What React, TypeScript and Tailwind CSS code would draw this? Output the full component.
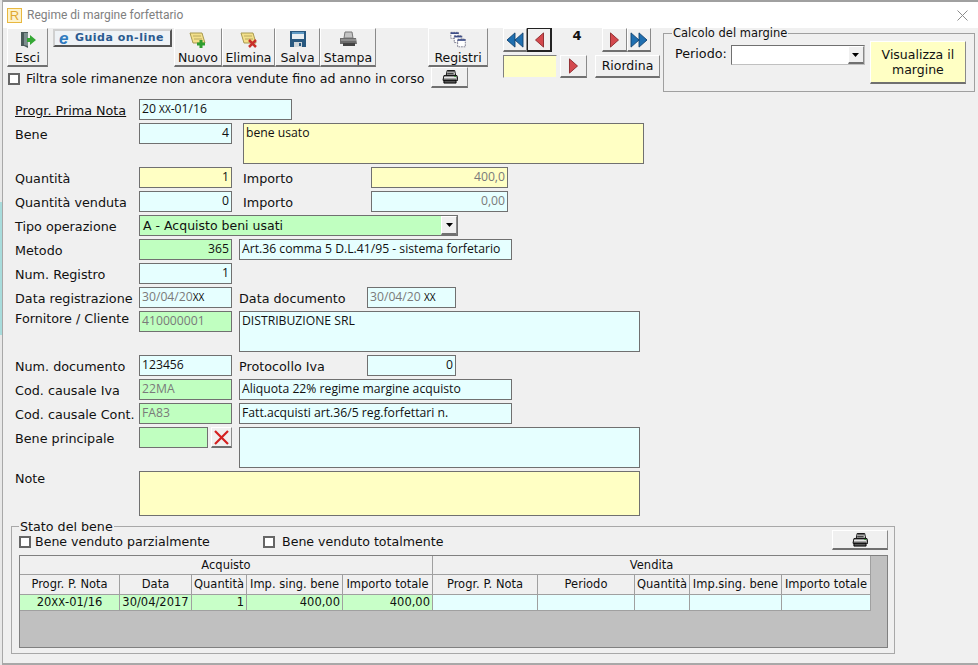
import type { ReactNode } from "react"

const bevel = "border border-t-white border-l-white border-r-[#8a8a8a] border-b-[#707070] border-b-2 bg-[#f0f0f0]"
const cyan = "bg-[#e6ffff]"
const yellow = "bg-[#ffffc4]"
const green = "bg-[#c0ffc0]"

const DoorIcon = () => (
  <svg width="18" height="18" viewBox="0 0 18 18">
    <path d="M2 1h7v16l-4-2H2z" fill="#4a5a5a" />
    <path d="M5 2h4v13l-4-1z" fill="#7d8f8f" />
    <path d="M8 7h3V4l6 5-6 5v-3H8z" fill="#35a835" />
  </svg>
)

const NoteIcon = ({ del }: { del?: boolean }) => (
  <svg width="20" height="18" viewBox="0 0 20 18">
    <path d="M2 2h12l3 10H5z" fill="#f3e08a" stroke="#a89a50" />
    <path d="M5 5h8M6 8h8" stroke="#b8a860" />
    {del ? (
      <path d="M10 9l7 7M17 9l-7 7" stroke="#c8302a" strokeWidth="2.5" />
    ) : (
      <path d="M13 9v8M9 13h8" stroke="#2f9e2f" strokeWidth="3" />
    )}
  </svg>
)

const FloppyIcon = () => (
  <svg width="16" height="16" viewBox="0 0 16 16">
    <path d="M0 0h16v16H0z" fill="#28587f" />
    <path d="M2 1h12v7H2z" fill="#e8eef2" />
    <path d="M2 1h12v2H2z" fill="#5f9ac4" />
    <path d="M4 11h8v5H4z" fill="#cfd6da" />
    <path d="M9 12h2v3H9z" fill="#28587f" />
  </svg>
)

const GrayPrinter = () => (
  <svg width="19" height="16" viewBox="0 0 19 16">
    <path d="M6 1h7l1 6H5z" fill="#c4c4c4" stroke="#777" />
    <path d="M1 7h16l1 6H1z" fill="#6c6c6c" />
    <path d="M2 8h15v2H2z" fill="#8f8f8f" />
    <path d="M4 12h12v3H4z" fill="#444" />
  </svg>
)

const BlackPrinter = () => (
  <svg width="16" height="14" viewBox="0 0 17 15">
    <path d="M5.500.5h8l1 5h-10z" fill="#fff" stroke="#000" />
    <path d="M6 2h7M5.500 4h7" stroke="#000" />
    <path d="M2 6h14l1 5H1z" fill="#a8a8a8" stroke="#000" />
    <path d="M2 8h13" stroke="#eee" />
    <path d="M2 11h13v3H2z" fill="#555" stroke="#000" />
    <path d="M13 7h2" stroke="#2c9c2c" />
  </svg>
)

const WindowsIcon = () => (
  <svg width="17" height="18" viewBox="0 0 20 20">
    <path d="M1 1h9v7H1z" fill="#fff" stroke="#6a6a80" strokeDasharray="2 1" />
    <path d="M1 1h9v2H1z" fill="#3d4d88" />
    <path d="M5 5h9v8H5z" fill="#fff" stroke="#6a6a80" strokeDasharray="2 1" />
    <path d="M5 5h9v2H5z" fill="#3d4d88" />
    <path d="M9 9h9v9H9z" fill="#fff" stroke="#6a6a80" strokeDasharray="2 1" />
    <path d="M9 9h9v2H9z" fill="#3d4d88" />
  </svg>
)

const Arrow = ({ left, double }: { left?: boolean; double?: boolean }) => {
  const fill = double ? "#1f6fb0" : "#d4494e"
  const stroke = double ? "#0d3f6e" : "#8a2427"
  return (
    <svg width={double ? 18 : 11} height="16" viewBox={double ? "0 0 20 18" : "0 0 11 18"} className={left ? "" : "rotate-180"}>
      <path d="M1 9l9-8v16z" fill={fill} stroke={stroke} />
      {double && <path d="M10 9l9-8v16z" fill={fill} stroke={stroke} />}
    </svg>
  )
}

const ToolBtn = ({ icon, label, w }: { icon: ReactNode; label: string; w: string }) => (
  <button className={`${bevel} ${w} flex h-[39px] flex-col items-center justify-between pt-[2px] text-[12.500px] leading-[14px]`}>
    {icon}
    <span>{label}</span>
  </button>
)

const Field = ({ w, h = "h-[21px]", bg, right, gray, children }: { w: string; h?: string; bg: string; right?: boolean; gray?: boolean; children?: ReactNode }) => (
  <div className={`${w} ${h} ${bg} ${right ? "text-right" : ""} ${gray ? "text-[#7a7a7a]" : "text-[#111]"} shrink-0 border border-[#707070] px-[2px] font-['Open_Sans',sans-serif] text-[12.200px] leading-[18px] whitespace-nowrap`}>
    {children}
  </div>
)

const Row = ({ label, children, underline, high }: { label: string; children?: ReactNode; underline?: boolean; high?: boolean }) => (
  <div className="mt-[3px] flex items-start pl-[12px]">
    <span className={`w-[124px] shrink-0 text-[12.750px] leading-[17px] whitespace-nowrap ${high ? "-mt-[1px]" : "pt-[3px]"} ${underline ? "underline" : ""}`}>{label}</span>
    {children}
  </div>
)

const SideLabel = ({ ml, children }: { ml: string; children: ReactNode }) => (
  <span className={`${ml} w-[128px] pt-[3px] text-[12.750px] leading-[17px]`}>{children}</span>
)

const Check = () => <input type="checkbox" readOnly className="size-[12px] shrink-0 appearance-none border-2 border-[#666] bg-white" />

const Small = ({ children }: { children: ReactNode }) => <span className="text-[10px] text-black">{children}</span>

const DropArrow = () => (
  <span className={`${bevel} absolute top-0 right-0 flex h-full w-[16px] items-center justify-center`}>
    <svg width="7" height="4" viewBox="0 0 7 4">
      <path d="M0 0h7L3.500 4z" fill="#000" />
    </svg>
  </span>
)

const headAcquisto = [
  { label: "Progr. P. Nota", w: "w-[100px]" },
  { label: "Data", w: "w-[72px]" },
  { label: "Quantità", w: "w-[55px]" },
  { label: "Imp. sing. bene", w: "w-[96px]" },
  { label: "Importo totale", w: "w-[90px]" },
]
const headVendita = [
  { label: "Progr. P. Nota", w: "w-[105px]" },
  { label: "Periodo", w: "w-[97px]" },
  { label: "Quantità", w: "w-[55px]" },
  { label: "Imp.sing. bene", w: "w-[92px]" },
  { label: "Importo totale", w: "w-[89px]" },
]

const headCell = "h-[20px] border-r border-b border-[#a0a0a0] bg-[#f0f0f0] text-center text-[11.500px] leading-[19px] whitespace-nowrap"
const rowCell = "h-[16px] border-r border-b border-[#a0a0a0] text-[11.500px] leading-[15px] whitespace-nowrap px-[2px]"

export default function App() {
  return (
    <div className="flex h-[665px] w-[978px] overflow-hidden bg-[#f0f0f0] font-['DejaVu_Sans',sans-serif] text-[#111]">
      <div className="flex w-[3px] shrink-0 flex-col border-r border-[#a8a8a8] bg-[#e8e8e8]">
        <div className="h-[202px]" />
        <div className="h-[133px] bg-[#a8dcdc]" />
      </div>

      <div className="flex min-w-0 flex-1 flex-col">
        <div className="flex h-[28px] shrink-0 items-center border-t-2 border-[#a0a0a0] bg-white pr-[10px] pl-[4px]">
          <span className="flex size-[15px] items-center justify-center border border-[#e8b840] bg-[#fdf2cc] font-['Liberation_Sans',sans-serif] text-[13px] leading-none text-[#e0a830]">R</span>
          <span className="ml-[5px] flex-1 font-['Roboto',sans-serif] text-[12px] text-[#808080]">Regime di margine forfettario</span>
          <svg width="11" height="11" viewBox="0 0 11 11">
            <path d="M.5.5l10 10M10.500.5l-10 10" stroke="#8c8c8c" fill="none" />
          </svg>
        </div>

        <div className="flex h-[68px] shrink-0 pl-[4px]">
          <div className="w-[496px] shrink-0">
            <div className="flex items-start">
              <ToolBtn icon={<DoorIcon />} label="Esci" w="w-[41px]" />
              <button className="mt-[1px] ml-[5px] flex h-[18px] w-[119px] items-center gap-[6px] border-2 border-t-[#d0d0d0] border-r-[#555] border-b-[#555] border-l-[#d0d0d0] bg-[#eef2f6] pl-[4px] text-[11px] font-bold tracking-[0.5px] whitespace-nowrap text-[#2a5a90]">
                <span className="font-['Liberation_Sans',sans-serif] text-[17px] leading-none text-[#2f7ac0] italic">e</span>
                Guida on-line
              </button>
              <div className="ml-[2px] flex">
                <ToolBtn icon={<NoteIcon />} label="Nuovo" w="w-[48px]" />
                <ToolBtn icon={<NoteIcon del />} label="Elimina" w="w-[53px]" />
                <ToolBtn icon={<FloppyIcon />} label="Salva" w="w-[45px]" />
                <ToolBtn icon={<GrayPrinter />} label="Stampa" w="w-[56px]" />
              </div>
              <div className="ml-[52px]">
                <ToolBtn icon={<WindowsIcon />} label="Registri" w="w-[60px]" />
              </div>
            </div>
            <div className="flex items-start">
              <div className="mt-[3px] ml-[1px] flex w-[423px] shrink-0 items-center gap-[6px]">
                <Check />
                <span className="text-[12.600px] leading-[17px] whitespace-nowrap">Filtra sole rimanenze non ancora vendute fino ad anno in corso</span>
              </div>
              <button className={`${bevel} flex h-[21px] w-[37px] items-center justify-center`}>
                <BlackPrinter />
              </button>
            </div>
          </div>

          <div className="w-[157px] shrink-0">
            <div className="flex h-[24px] items-start">
              <button className={`${bevel} flex h-[24px] w-[24px] items-center justify-center`}>
                <Arrow left double />
              </button>
              <button className="flex h-[24px] w-[25px] items-center justify-center border border-r-2 border-b-2 border-[#222] bg-[#f0f0f0]">
                <Arrow left />
              </button>
              <span className="w-[50px] text-center text-[13px] leading-[16px] font-bold">4</span>
              <button className={`${bevel} flex h-[24px] w-[25px] items-center justify-center`}>
                <Arrow />
              </button>
              <button className={`${bevel} flex h-[24px] w-[24px] items-center justify-center`}>
                <Arrow double />
              </button>
            </div>
            <div className="mt-[3px] flex items-start">
              <div className="h-[23px] w-[54px] border border-t-[#808080] border-r-[#f0f0f0] border-b-[#f0f0f0] border-l-[#808080] bg-[#ffffc4]" />
              <button className={`${bevel} ml-[3px] flex h-[23px] w-[27px] items-center justify-center`}>
                <Arrow />
              </button>
              <button className={`${bevel} ml-[8px] h-[23px] w-[65px] text-[12.500px] leading-[20px]`}>Riordina</button>
            </div>
          </div>

          <fieldset className="mt-[-2px] ml-[3px] flex h-[66px] w-[312px] shrink-0 items-start border border-[#a0a0a0] pl-[11px]">
            <legend className="-ml-[3px] px-[1px] text-[11.500px] leading-[15px]">Calcolo del margine</legend>
            <span className="mt-[4px] text-[12.750px] leading-[18px]">Periodo:</span>
            <div className="relative mt-[4px] ml-[4px] h-[20px] w-[134px] border border-t-[#707070] border-r-[#c0c0c0] border-b-[#c0c0c0] border-l-[#707070] bg-white">
              <DropArrow />
            </div>
            <button className={`${bevel} ml-[5px] h-[43px] w-[96px] bg-[#ffffc4] text-[12.500px] leading-[15px]`}>
              Visualizza il
              <br />
              margine
            </button>
          </fieldset>
        </div>

        <Row label="Progr. Prima Nota" underline>
          <Field w="w-[153px]" bg={cyan}>
            20 <Small>XX</Small>-01/16
          </Field>
        </Row>
        <Row label="Bene">
          <Field w="w-[93px]" bg={cyan} right>
            4
          </Field>
          <div className="ml-[11px]">
            <Field w="w-[401px]" h="h-[41px]" bg={yellow}>
              bene usato
            </Field>
          </div>
        </Row>
        <Row label="Quantità">
          <Field w="w-[93px]" bg={yellow} right>
            1
          </Field>
          <SideLabel ml="ml-[11px]">Importo</SideLabel>
          <Field w="w-[137px]" bg={yellow} right gray>
            400,0
          </Field>
        </Row>
        <Row label="Quantità venduta">
          <Field w="w-[93px]" bg={cyan} right>
            0
          </Field>
          <SideLabel ml="ml-[11px]">Importo</SideLabel>
          <Field w="w-[137px]" bg={cyan} right gray>
            0,00
          </Field>
        </Row>
        <Row label="Tipo operazione">
          <div className="relative h-[21px] w-[319px] border border-[#707070] bg-[#c0ffc0] px-[3px] text-[12.500px] leading-[20px]">
            A - Acquisto beni usati
            <DropArrow />
          </div>
        </Row>
        <Row label="Metodo">
          <Field w="w-[93px]" bg={green} right>
            365
          </Field>
          <div className="ml-[7px]">
            <Field w="w-[273px]" bg={cyan}>
              Art.36 comma 5 D.L.41/95 - sistema forfetario
            </Field>
          </div>
        </Row>
        <Row label="Num. Registro">
          <Field w="w-[93px]" bg={cyan} right>
            1
          </Field>
        </Row>
        <Row label="Data registrazione">
          <Field w="w-[93px]" bg={cyan} gray>
            30/04/20<Small>XX</Small>
          </Field>
          <SideLabel ml="ml-[7px]">Data documento</SideLabel>
          <Field w="w-[89px]" bg={cyan} gray>
            30/04/20 <Small>XX</Small>
          </Field>
        </Row>
        <Row label="Fornitore / Cliente" high>
          <Field w="w-[93px]" bg={green} gray>
            410000001
          </Field>
          <div className="ml-[7px]">
            <Field w="w-[401px]" h="h-[41px]" bg={cyan}>
              DISTRIBUZIONE SRL
            </Field>
          </div>
        </Row>
        <Row label="Num. documento">
          <Field w="w-[93px]" bg={cyan}>
            123456
          </Field>
          <SideLabel ml="ml-[7px]">Protocollo Iva</SideLabel>
          <Field w="w-[89px]" bg={cyan} right>
            0
          </Field>
        </Row>
        <Row label="Cod. causale Iva">
          <Field w="w-[93px]" bg={green} gray>
            22MA
          </Field>
          <div className="ml-[7px]">
            <Field w="w-[273px]" bg={cyan}>
              Aliquota 22% regime margine acquisto
            </Field>
          </div>
        </Row>
        <Row label="Cod. causale Cont.">
          <Field w="w-[93px]" bg={green} gray>
            FA83
          </Field>
          <div className="ml-[7px]">
            <Field w="w-[273px]" bg={cyan}>
              Fatt.acquisti art.36/5 reg.forfettari n.
            </Field>
          </div>
        </Row>
        <Row label="Bene principale">
          <Field w="w-[69px]" bg={green} />
          <button className={`${bevel} ml-[3px] flex h-[21px] w-[21px] items-center justify-center`}>
            <svg width="15" height="15" viewBox="0 0 15 15">
              <path d="M1 1l13 13M14 1L1 14" stroke="#d42020" strokeWidth="2.200" />
            </svg>
          </button>
          <div className="ml-[7px]">
            <Field w="w-[401px]" h="h-[41px]" bg={cyan} />
          </div>
        </Row>
        <Row label="Note" high>
          <Field w="w-[501px]" h="h-[45px]" bg={yellow} />
        </Row>

        <fieldset className="mt-[3px] ml-[8px] h-[135px] w-[884px] border border-[#a8a8a8] pr-[6px] pl-[7px]">
          <legend className="px-[1px] text-[12.700px] leading-[15px]">Stato del bene</legend>
          <div className="flex h-[21px] items-start">
            <div className="-mt-[1px] flex w-[244px] items-center gap-[4px]">
              <Check />
              <span className="text-[12.600px] leading-[17px] whitespace-nowrap">Bene venduto parzialmente</span>
            </div>
            <div className="-mt-[1px] flex flex-1 items-center gap-[7px]">
              <Check />
              <span className="text-[12.600px] leading-[17px] whitespace-nowrap">Bene venduto totalmente</span>
            </div>
            <button className={`${bevel} -mt-[4px] flex h-[20px] w-[56px] items-center justify-center`}>
              <BlackPrinter />
            </button>
          </div>
          <div className="h-[93px] border border-[#808080] bg-[#c0c0c0]">
            <div className="flex">
              <div className="h-[19px] w-[413px] border-r border-b border-[#a0a0a0] bg-[#f0f0f0] text-center text-[11.500px] leading-[18px]">Acquisto</div>
              <div className="h-[19px] w-[438px] border-r border-b border-[#a0a0a0] bg-[#f0f0f0] text-center text-[11.500px] leading-[18px]">Vendita</div>
            </div>
            <div className="flex">
              {[...headAcquisto, ...headVendita].map((c, i) => (
                <div key={i} className={`${c.w} ${headCell}`}>
                  {c.label}
                </div>
              ))}
            </div>
            <div className="flex">
              <div className={`${rowCell} w-[100px] bg-[#c8ffc8] text-center`}>
                20<Small>XX</Small>-01/16
              </div>
              <div className={`${rowCell} w-[72px] bg-[#c8ffc8] text-center`}>30/04/2017</div>
              <div className={`${rowCell} w-[55px] bg-[#c8ffc8] text-right`}>1</div>
              <div className={`${rowCell} w-[96px] bg-[#c8ffc8] text-right`}>400,00</div>
              <div className={`${rowCell} w-[90px] bg-[#c8ffc8] text-right`}>400,00</div>
              {headVendita.map((c, i) => (
                <div key={i} className={`${rowCell} ${c.w} bg-[#e6ffff]`} />
              ))}
            </div>
          </div>
        </fieldset>

        <div className="mt-[9px] h-[2px] bg-[#a8a8a8]" />
      </div>
    </div>
  )
}
